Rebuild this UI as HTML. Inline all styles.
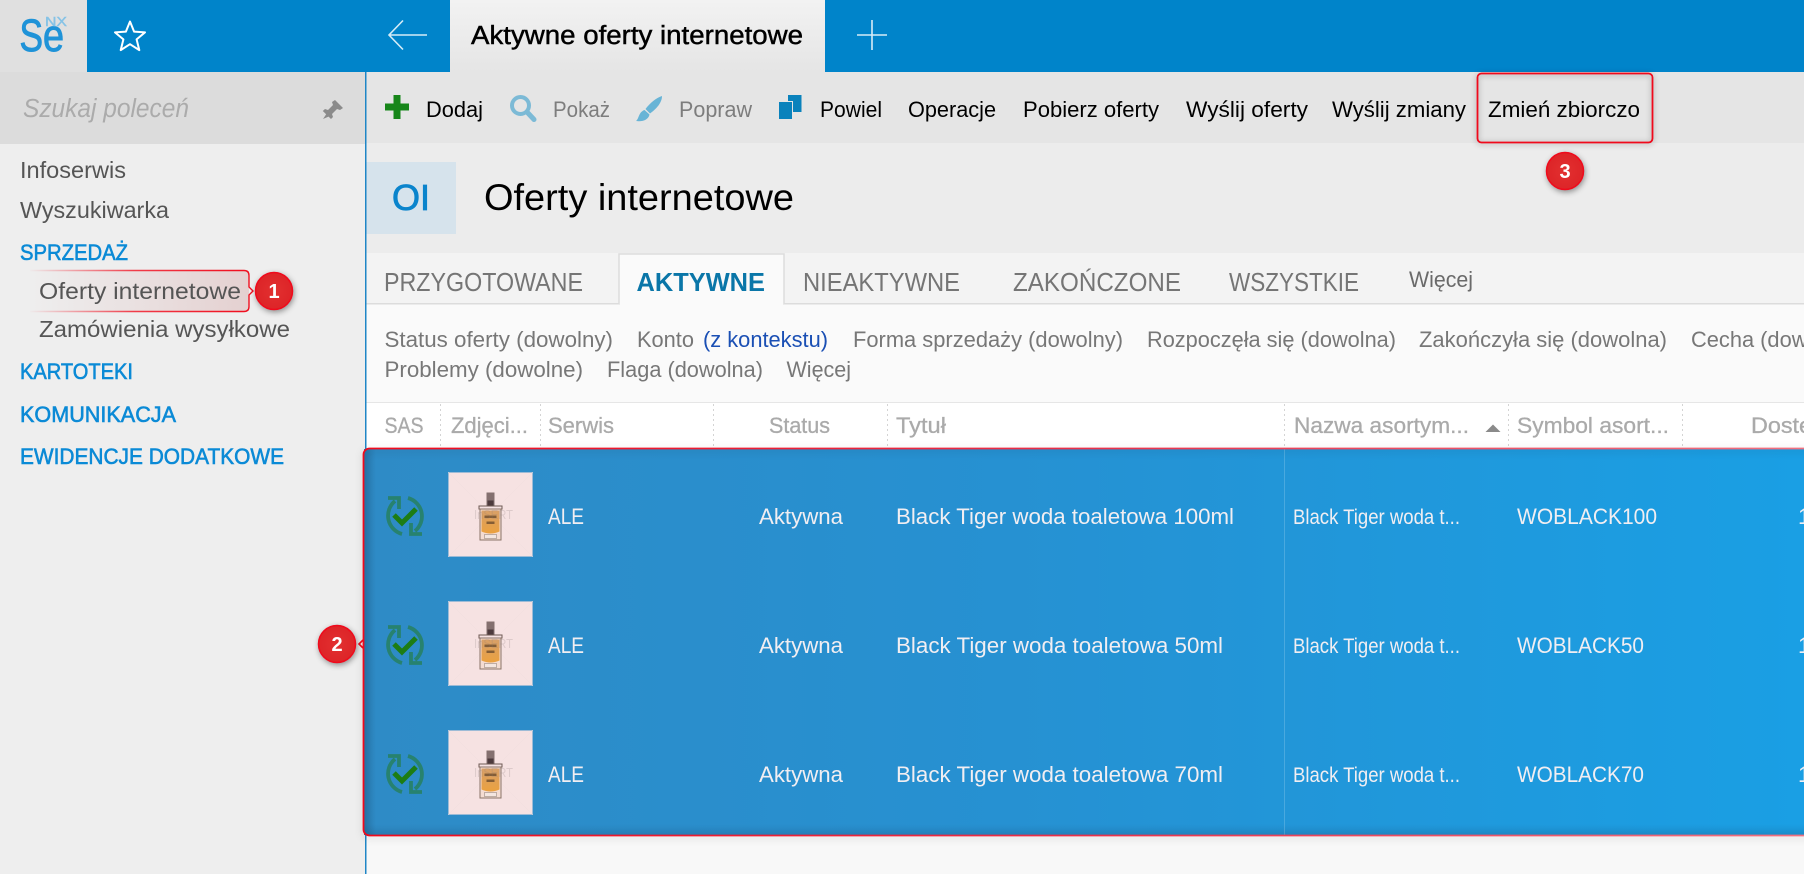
<!DOCTYPE html>
<html lang="pl">
<head>
<meta charset="utf-8">
<title>Oferty internetowe</title>
<style>
html,body{margin:0;padding:0;width:1804px;height:874px;overflow:hidden;background:#f8f8f8}
svg{display:block}
text{font-family:"Liberation Sans",sans-serif;white-space:pre}
.tb{font-size:22.5px;fill:#000}
.tbd{font-size:22.5px;fill:#7d7d7d}
.nav{font-size:23.5px;fill:#555}
.sec{font-size:22.5px;fill:#0b8ad6;stroke:#0b8ad6;stroke-width:.6}
.tab{font-size:25.5px;fill:#757575}
.flt{font-size:22px;fill:#777}
.hd{font-size:22.5px;fill:#aaa;stroke:#aaa;stroke-width:.3}
.row{font-size:22.5px;fill:#f1eef2}
.nm{font-size:21px;fill:#f1eef2}
.num{font-size:20px;font-weight:bold;fill:#fff;text-anchor:middle}
</style>
</head>
<body>
<svg width="1804" height="874" viewBox="0 0 1804 874" xmlns="http://www.w3.org/2000/svg">
<defs>
<linearGradient id="rowg" x1="0" x2="1" y1="0" y2="0"><stop offset="0" stop-color="#2e8bc6"/><stop offset=".45" stop-color="#2691d2"/><stop offset="1" stop-color="#1a9fe4"/></linearGradient>
<linearGradient id="tabg" x1="0" x2="0" y1="0" y2="1"><stop offset="0" stop-color="#f2f2f2"/><stop offset="1" stop-color="#e5e5e5"/></linearGradient>
<linearGradient id="hl" x1="0" x2="1" y1="0" y2="0"><stop offset="0" stop-color="#e6d4d4" stop-opacity="0"/><stop offset="1" stop-color="#e4d0d0"/></linearGradient>
<linearGradient id="hls" gradientUnits="userSpaceOnUse" x1="28" x2="240" y1="0" y2="0"><stop offset="0" stop-color="#f01020" stop-opacity="0"/><stop offset=".5" stop-color="#f01020" stop-opacity=".8"/><stop offset="1" stop-color="#f01020"/></linearGradient>
<linearGradient id="box" gradientUnits="userSpaceOnUse" x1="364" x2="1804" y1="0" y2="0"><stop offset="0" stop-color="#f00a1c"/><stop offset=".5" stop-color="#e8304a"/><stop offset="1" stop-color="#f07080"/></linearGradient>
<linearGradient id="inL" x1="0" x2="1" y1="0" y2="0"><stop offset="0" stop-color="#1a4060" stop-opacity=".3"/><stop offset="1" stop-color="#1a4060" stop-opacity="0"/></linearGradient>
<linearGradient id="inB" x1="0" x2="0" y1="0" y2="1"><stop offset="0" stop-color="#1a4060" stop-opacity="0"/><stop offset="1" stop-color="#1a4060" stop-opacity=".3"/></linearGradient>
<radialGradient id="bdg" cx=".5" cy=".5" r=".6"><stop offset="0" stop-color="#e23030"/><stop offset="1" stop-color="#dc2226"/></radialGradient>
<linearGradient id="amb" x1="0" x2="0" y1="0" y2="1"><stop offset="0" stop-color="#d8a068"/><stop offset="1" stop-color="#eba13f"/></linearGradient>
<g id="sync" fill="none" stroke="#27826f" stroke-width="3.800">
<path d="M-3 18A19 19 0 0 1-10-15"/>
<path d="M-17-18H-6V-7"/>
<path d="M3-18A19 19 0 0 1 10 15"/>
<path d="M17 18H6V7"/>
<path d="M-11-1L-3 7L11-7" stroke="#1d7d14" stroke-width="5"/>
</g>
<g id="thumb">
<rect x="0" y="0" width="84" height="84" fill="#f6e2e2" stroke="#9dbbd6" stroke-width="1"/>
<path d="M0 0L84 84M84 0L0 84" stroke="#f2dfdf" stroke-width=".6"/>
<rect x="38" y="20" width="8" height="13" fill="#84706f"/>
<rect x="39" y="28" width="6" height="5" fill="#4d3a3c"/>
<rect x="30.500" y="33.500" width="23" height="3" fill="none" stroke="#6e5a54" stroke-width="1"/>
<rect x="31.500" y="36.500" width="21" height="31" fill="#f4dcd2" stroke="#8a7468" stroke-width="1"/>
<path d="M33 38H51V59Q42 63 33 59Z" fill="url(#amb)"/>
<rect x="36" y="43" width="12" height="2.500" fill="#5d4028" opacity=".7"/>
<rect x="38" y="49" width="8" height="2.500" fill="#5d4028" opacity=".7"/>
<rect x="36" y="62" width="12" height="4" fill="#f4e6e0" stroke="#9a8a80" stroke-width=".6"/>
</g>
</defs>

<!-- backgrounds -->
<rect width="1804" height="874" fill="#f8f8f8"/>
<rect x="0" y="72" width="365" height="802" fill="#eeeeee"/>
<rect x="0" y="72" width="365" height="72" fill="#dcdcdc"/>
<rect x="366" y="72" width="1438" height="71" fill="#e5e5e5"/>
<rect x="366" y="143" width="1438" height="110" fill="#ececec"/>
<rect x="366" y="162" width="90" height="72" fill="#d6e3ec"/>
<rect x="366" y="253" width="1438" height="51" fill="#f3f3f3"/>
<rect x="366" y="304" width="1438" height="98" fill="#fafafa"/>
<rect x="366" y="303" width="1438" height="1.500" fill="#dcdcdc"/>
<rect x="366" y="402" width="1438" height="46" fill="#ffffff"/>
<rect x="366" y="402" width="1438" height="1" fill="#e6e6e6"/>
<rect x="365" y="72" width="1.500" height="802" fill="#1f86c6"/>

<!-- top bar -->
<rect x="0" y="0" width="87" height="72" fill="#e0e0e0"/>
<rect x="87" y="0" width="1717" height="72" fill="#0084ca"/>
<rect x="450" y="0" width="375" height="72" fill="url(#tabg)"/>
<text x="19.500" y="51" font-size="45" fill="#1f93d8" stroke="#1f93d8" stroke-width="1" textLength="23.500" lengthAdjust="spacingAndGlyphs">S</text>
<text x="43" y="51" font-size="45" fill="#1f93d8" stroke="#1f93d8" stroke-width="1" textLength="21" lengthAdjust="spacingAndGlyphs">e</text>
<text x="45" y="26" font-size="12.500" fill="#86c3e6" stroke="#86c3e6" stroke-width=".4" textLength="22" lengthAdjust="spacingAndGlyphs">NX</text>
<path d="M130 21.500L134.100 31.600L145 32.400L136.600 39.400L139.300 50.100L130 44.200L120.700 50.100L123.400 39.400L115 32.400L125.900 31.600Z" fill="none" stroke="#fff" stroke-width="2" stroke-linejoin="round"/>
<path d="M403 20.500L389 35L403 49.500M389 35H427" fill="none" stroke="#d6ecf7" stroke-width="1.600"/>
<path d="M872 20V50M857 35H887" fill="none" stroke="#d6ecf7" stroke-width="1.600"/>
<text x="471" y="44" font-size="25.500" fill="#000" stroke="#000" stroke-width=".45" textLength="332" lengthAdjust="spacingAndGlyphs">Aktywne oferty internetowe</text>

<!-- search -->
<text x="23" y="117" font-size="25.500" font-style="italic" fill="#ababab" textLength="166" lengthAdjust="spacingAndGlyphs">Szukaj poleceń</text>
<g fill="#8b8b8b"><path d="M335 100L343 108L340 110L337 109L332 114L333 117L331 119L322.800 111L325 109L328 110L333 105L332 102Z"/><path d="M327 113L330 116L323 119Z"/></g>

<!-- sidebar -->
<text class="nav" x="20" y="178" textLength="106" lengthAdjust="spacingAndGlyphs">Infoserwis</text>
<text class="nav" x="20" y="218" textLength="149" lengthAdjust="spacingAndGlyphs">Wyszukiwarka</text>
<text class="sec" x="20" y="260" textLength="108" lengthAdjust="spacingAndGlyphs">SPRZEDAŻ</text>
<rect x="30" y="271" width="219" height="40" fill="url(#hl)"/>
<path d="M30 270.500H244Q249 270.500 249 275.500V287L253 291L249 295V306.500Q249 311.500 244 311.500H30" fill="none" stroke="url(#hls)" stroke-width="1.400"/>
<text class="nav" x="39" y="299" textLength="202" lengthAdjust="spacingAndGlyphs">Oferty internetowe</text>
<text class="nav" x="39" y="337" textLength="251" lengthAdjust="spacingAndGlyphs">Zamówienia wysyłkowe</text>
<text class="sec" x="20" y="379" textLength="113" lengthAdjust="spacingAndGlyphs">KARTOTEKI</text>
<text class="sec" x="20" y="422" textLength="156" lengthAdjust="spacingAndGlyphs">KOMUNIKACJA</text>
<text class="sec" x="20" y="464" textLength="264" lengthAdjust="spacingAndGlyphs">EWIDENCJE DODATKOWE</text>

<!-- toolbar -->
<path d="M393.500 95H400.500V103.500H409V110.500H400.500V119H393.500V110.500H385V103.500H393.500Z" fill="#17861a"/>
<text class="tb" x="426" y="117" textLength="57" lengthAdjust="spacingAndGlyphs">Dodaj</text>
<circle cx="520.500" cy="105.500" r="8.500" fill="none" stroke="#7cbad6" stroke-width="4"/>
<path d="M527 112L534 119.500" stroke="#7cbad6" stroke-width="5" stroke-linecap="round"/>
<text class="tbd" x="553" y="117" textLength="57" lengthAdjust="spacingAndGlyphs">Pokaż</text>
<path d="M662 96C662 103 656 109 650 113.500L645.500 109C650 103 656 98 662 96Z" fill="#68b4d6"/>
<path d="M644.500 110L649.500 114.500C648.500 120 642 122 636 121C639 119 638.500 112 644.500 110Z" fill="#68b4d6"/>
<text class="tbd" x="679" y="117" textLength="73" lengthAdjust="spacingAndGlyphs">Popraw</text>
<rect x="788" y="95" width="13.500" height="17" fill="#0a82bc"/>
<rect x="778.500" y="101.500" width="14" height="18" fill="#0a82bc" stroke="#e5e5e5" stroke-width="1"/>
<text class="tb" x="820" y="117" textLength="62" lengthAdjust="spacingAndGlyphs">Powiel</text>
<text class="tb" x="908" y="117" textLength="88" lengthAdjust="spacingAndGlyphs">Operacje</text>
<text class="tb" x="1023" y="117" textLength="136" lengthAdjust="spacingAndGlyphs">Pobierz oferty</text>
<text class="tb" x="1186" y="117" textLength="122" lengthAdjust="spacingAndGlyphs">Wyślij oferty</text>
<text class="tb" x="1332" y="117" textLength="134" lengthAdjust="spacingAndGlyphs">Wyślij zmiany</text>
<text class="tb" x="1488" y="117" textLength="152" lengthAdjust="spacingAndGlyphs">Zmień zbiorczo</text>
<rect x="1477.500" y="73.500" width="175" height="69" rx="4" fill="none" stroke="#f00a1c" stroke-width="1.800" style="filter:drop-shadow(0 1px 3px rgba(0,0,0,.35))"/>

<!-- title -->
<text x="392" y="210" font-size="36" fill="#0a84cc" stroke="#0a84cc" stroke-width=".8" textLength="38" lengthAdjust="spacingAndGlyphs">OI</text>
<text x="484" y="210" font-size="37.500" fill="#000" textLength="310" lengthAdjust="spacingAndGlyphs">Oferty internetowe</text>

<!-- tabs -->
<path d="M619 304V254H784V304" fill="#fafafa" stroke="#dcdcdc" stroke-width="1.500"/>
<rect x="620" y="302" width="163" height="3" fill="#fafafa"/>
<text class="tab" x="384" y="291" textLength="199" lengthAdjust="spacingAndGlyphs">PRZYGOTOWANE</text>
<text class="tab" x="636.500" y="291" font-weight="bold" style="fill:#0a76a8" textLength="128.500" lengthAdjust="spacingAndGlyphs">AKTYWNE</text>
<text class="tab" x="803" y="291" textLength="157" lengthAdjust="spacingAndGlyphs">NIEAKTYWNE</text>
<text class="tab" x="1013" y="291" textLength="168" lengthAdjust="spacingAndGlyphs">ZAKOŃCZONE</text>
<text class="tab" x="1229" y="291" textLength="130" lengthAdjust="spacingAndGlyphs">WSZYSTKIE</text>
<text x="1409" y="287" font-size="22.500" fill="#6a6a6a" textLength="64" lengthAdjust="spacingAndGlyphs">Więcej</text>

<!-- filters -->
<text class="flt" x="384.500" y="347" textLength="228.500" lengthAdjust="spacingAndGlyphs">Status oferty (dowolny)</text>
<text class="flt" x="637" y="347" textLength="57" lengthAdjust="spacingAndGlyphs">Konto</text>
<text class="flt" x="703" y="347" style="fill:#1a4fb4" textLength="125" lengthAdjust="spacingAndGlyphs">(z kontekstu)</text>
<text class="flt" x="853" y="347" textLength="270" lengthAdjust="spacingAndGlyphs">Forma sprzedaży (dowolny)</text>
<text class="flt" x="1147" y="347" textLength="249" lengthAdjust="spacingAndGlyphs">Rozpoczęła się (dowolna)</text>
<text class="flt" x="1419" y="347" textLength="248" lengthAdjust="spacingAndGlyphs">Zakończyła się (dowolna)</text>
<text class="flt" x="1691" y="347" textLength="165" lengthAdjust="spacingAndGlyphs">Cecha (dowolna)</text>
<text class="flt" x="384.500" y="377" textLength="198.500" lengthAdjust="spacingAndGlyphs">Problemy (dowolne)</text>
<text class="flt" x="607" y="377" textLength="156" lengthAdjust="spacingAndGlyphs">Flaga (dowolna)</text>
<text class="flt" x="786.500" y="377" textLength="64.500" lengthAdjust="spacingAndGlyphs">Więcej</text>

<!-- table header -->
<g stroke="#d4d4d4" stroke-width="1" stroke-dasharray="2 3">
<path d="M440.500 404V448M540.500 404V448M713.500 404V448M887.500 404V448M1284.500 404V448M1508.500 404V448M1682.500 404V448"/>
</g>
<text class="hd" x="384.500" y="433" textLength="39" lengthAdjust="spacingAndGlyphs">SAS</text>
<text class="hd" x="451" y="433" textLength="77" lengthAdjust="spacingAndGlyphs">Zdjęci...</text>
<text class="hd" x="548" y="433" textLength="66" lengthAdjust="spacingAndGlyphs">Serwis</text>
<text class="hd" x="769" y="433" textLength="61" lengthAdjust="spacingAndGlyphs">Status</text>
<text class="hd" x="896" y="433" textLength="50" lengthAdjust="spacingAndGlyphs">Tytuł</text>
<text class="hd" x="1294" y="433" textLength="175" lengthAdjust="spacingAndGlyphs">Nazwa asortym...</text>
<path d="M1485.500 432L1493 424.500L1500.500 432Z" fill="#8a8a8a"/>
<text class="hd" x="1517" y="433" textLength="152" lengthAdjust="spacingAndGlyphs">Symbol asort...</text>
<text class="hd" x="1751" y="433" textLength="100" lengthAdjust="spacingAndGlyphs">Dostępne</text>

<!-- selected rows -->
<rect x="364" y="449" width="1440" height="386" fill="url(#rowg)"/>
<rect x="364" y="449" width="12" height="386" fill="url(#inL)"/>
<rect x="364" y="824" width="1440" height="11" fill="url(#inB)" opacity=".55"/>
<rect x="1284" y="449" width="1" height="386" fill="#fff" opacity=".18"/>
<rect x="363.500" y="448.500" width="1460" height="387" rx="6" fill="none" stroke="url(#box)" stroke-width="1.800" style="filter:drop-shadow(0 2px 4px rgba(0,0,0,.2))"/>
<path d="M363 640L359 644L363 648" fill="none" stroke="#f00a1c" stroke-width="1.600"/>

<use href="#sync" transform="translate(405 516)"/>
<use href="#thumb" transform="translate(448.500 472.500)"/>
<text x="474" y="519" font-size="13" fill="#8a7a7a" opacity=".22" textLength="39" lengthAdjust="spacingAndGlyphs">InSERT</text>
<text class="row" x="548" y="524" textLength="36" lengthAdjust="spacingAndGlyphs">ALE</text>
<text class="row" x="759" y="524" textLength="84" lengthAdjust="spacingAndGlyphs">Aktywna</text>
<text class="row" x="896" y="524" textLength="338" lengthAdjust="spacingAndGlyphs">Black Tiger woda toaletowa 100ml</text>
<text class="nm" x="1293" y="524" textLength="167" lengthAdjust="spacingAndGlyphs">Black Tiger woda t...</text>
<text class="row" x="1517" y="524" textLength="140" lengthAdjust="spacingAndGlyphs">WOBLACK100</text>
<text class="row" x="1798" y="524">1</text>

<use href="#sync" transform="translate(405 645)"/>
<use href="#thumb" transform="translate(448.500 601.500)"/>
<text x="474" y="648" font-size="13" fill="#8a7a7a" opacity=".22" textLength="39" lengthAdjust="spacingAndGlyphs">InSERT</text>
<text class="row" x="548" y="653" textLength="36" lengthAdjust="spacingAndGlyphs">ALE</text>
<text class="row" x="759" y="653" textLength="84" lengthAdjust="spacingAndGlyphs">Aktywna</text>
<text class="row" x="896" y="653" textLength="327" lengthAdjust="spacingAndGlyphs">Black Tiger woda toaletowa 50ml</text>
<text class="nm" x="1293" y="653" textLength="167" lengthAdjust="spacingAndGlyphs">Black Tiger woda t...</text>
<text class="row" x="1517" y="653" textLength="127" lengthAdjust="spacingAndGlyphs">WOBLACK50</text>
<text class="row" x="1798" y="653">1</text>

<use href="#sync" transform="translate(405 774)"/>
<use href="#thumb" transform="translate(448.500 730.500)"/>
<text x="474" y="777" font-size="13" fill="#8a7a7a" opacity=".22" textLength="39" lengthAdjust="spacingAndGlyphs">InSERT</text>
<text class="row" x="548" y="782" textLength="36" lengthAdjust="spacingAndGlyphs">ALE</text>
<text class="row" x="759" y="782" textLength="84" lengthAdjust="spacingAndGlyphs">Aktywna</text>
<text class="row" x="896" y="782" textLength="327" lengthAdjust="spacingAndGlyphs">Black Tiger woda toaletowa 70ml</text>
<text class="nm" x="1293" y="782" textLength="167" lengthAdjust="spacingAndGlyphs">Black Tiger woda t...</text>
<text class="row" x="1517" y="782" textLength="127" lengthAdjust="spacingAndGlyphs">WOBLACK70</text>
<text class="row" x="1798" y="782">1</text>

<!-- badges -->
<g style="filter:drop-shadow(1px 2px 3px rgba(0,0,0,.4))">
<circle cx="274" cy="291" r="18.500" fill="url(#bdg)" stroke="#f00a1c" stroke-width="1.500"/>
<circle cx="337" cy="644" r="18.500" fill="url(#bdg)" stroke="#f00a1c" stroke-width="1.500"/>
<circle cx="1565" cy="171" r="18.500" fill="url(#bdg)" stroke="#f00a1c" stroke-width="1.500"/>
</g>
<text class="num" x="274" y="298">1</text>
<text class="num" x="337" y="651">2</text>
<text class="num" x="1565" y="178">3</text>
</svg>
</body>
</html>
